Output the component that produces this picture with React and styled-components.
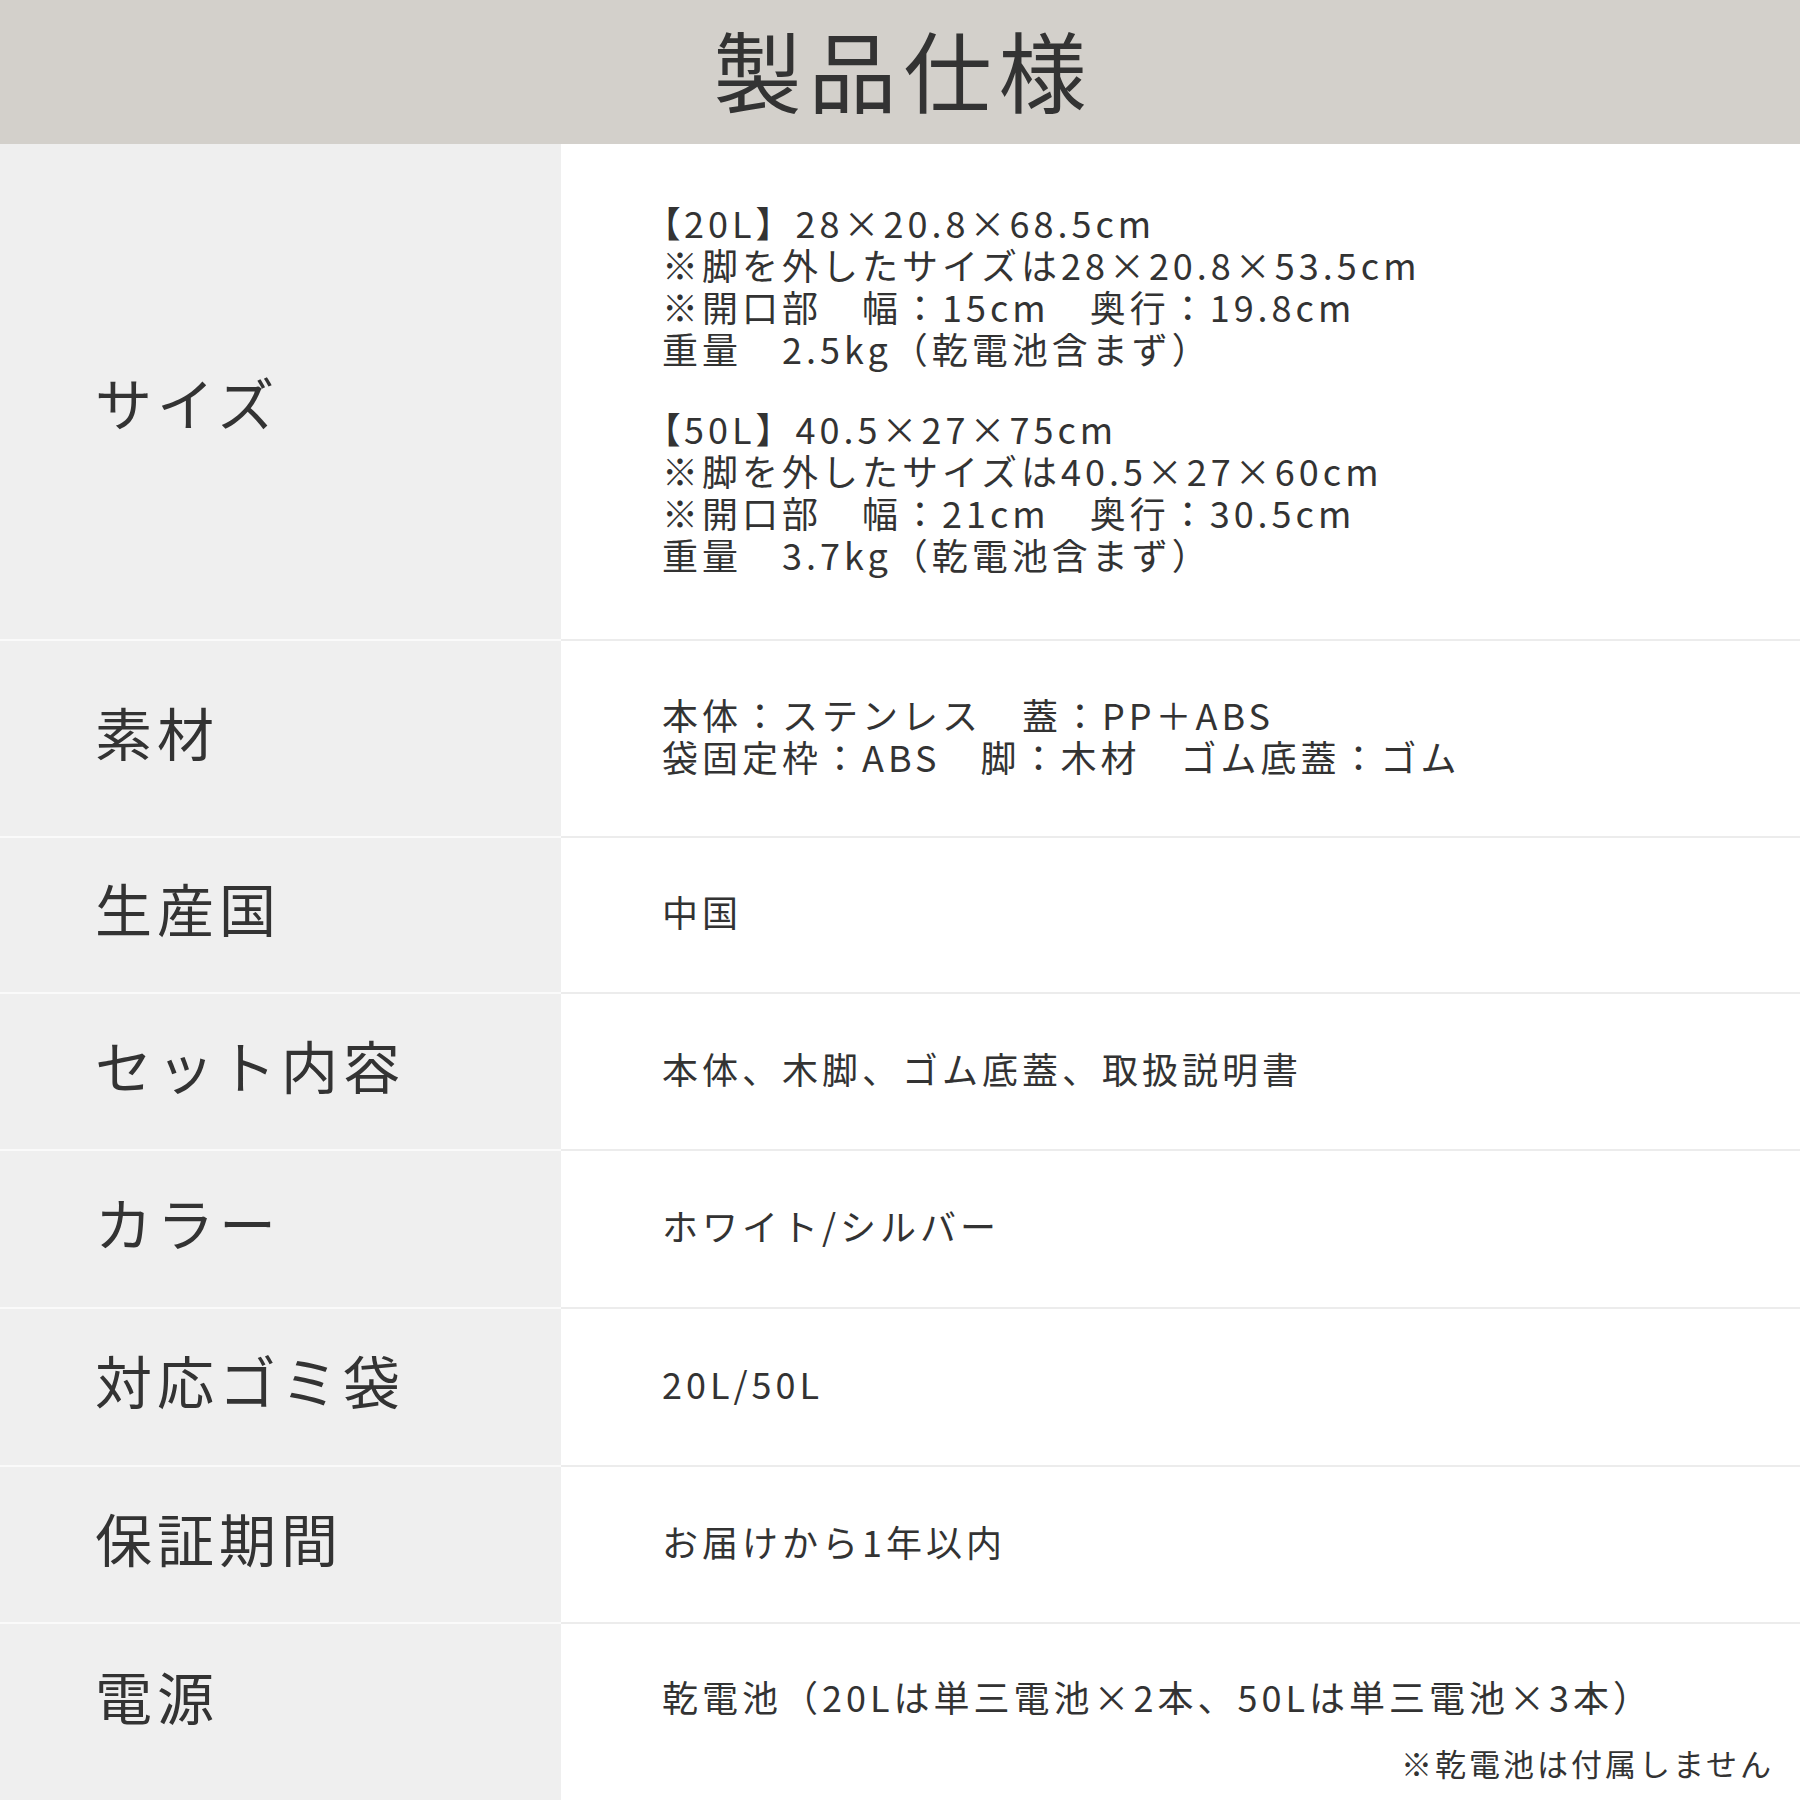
import styled, { createGlobalStyle } from "styled-components"

const GlobalStyle = createGlobalStyle`
  * { box-sizing: border-box; }
  body {
    margin: 0;
    background: #ffffff;
    font-family: "Noto Sans CJK JP", "Noto Sans", sans-serif;
    color: #333333;
  }
`;

const Page = styled.div`
  width: 1800px;
  height: 1800px;
  overflow: hidden;
`;

const Header = styled.header`
  height: 144px;
  padding-bottom: 8px;
  background-color: #d3d0cb;
  display: flex;
  align-items: center;
  justify-content: center;
`;

const Title = styled.h1`
  margin: 0;
  padding-left: 7px;
  font-size: 88px;
  font-weight: 400;
  letter-spacing: 7px;
  line-height: 1;
  color: #333333;
`;

const Table = styled.div`
  display: flex;
  flex-direction: column;
`;

const Row = styled.div`
  display: grid;
  grid-template-columns: 561px 1fr;
  min-height: ${(props) => props.$h}px;
`;

const Label = styled.div`
  display: flex;
  align-items: center;
  padding-left: 95px;
  padding-top: ${(props) => props.$offset || 0}px;
  padding-bottom: ${(props) => props.$bottom || 15}px;
  background-color: #efefef;
  border-top: ${(props) => (props.$first ? "none" : "2px solid #fafafa")};
  font-size: 57px;
  letter-spacing: 5px;
  line-height: 1.2;
`;

const Value = styled.div`
  display: flex;
  flex-direction: column;
  justify-content: ${(props) => (props.$note ? "flex-start" : "center")};
  padding-left: 101px;
  padding-top: ${(props) => (props.$note ? "51px" : "0")};
  padding-bottom: ${(props) => (props.$note ? "0" : "8px")};
  background-color: #ffffff;
  border-top: ${(props) => (props.$first ? "none" : "2px solid #ececec")};
  font-size: 36px;
  letter-spacing: 4px;
  line-height: 42px;
`;

const Block = styled.div`
  & + & {
    margin-top: 38px;
  }
`;

const Line = styled.div`
  white-space: pre;
`;

const OpenBracket = styled.span`
  font-feature-settings: "palt";
`;

const Note = styled.div`
  margin-top: 28px;
  padding-right: 26px;
  text-align: right;
  font-size: 31px;
  letter-spacing: 3px;
  line-height: 36px;
`;

const specs = [
  {
    label: "サイズ",
    h: 495,
    offset: 34,
    blocks: [
      [
        ["【", "20L】28×20.8×68.5cm"],
        "※脚を外したサイズは28×20.8×53.5cm",
        "※開口部　幅：15cm　奥行：19.8cm",
        "重量　2.5kg（乾電池含まず）",
      ],
      [
        ["【", "50L】40.5×27×75cm"],
        "※脚を外したサイズは40.5×27×60cm",
        "※開口部　幅：21cm　奥行：30.5cm",
        "重量　3.7kg（乾電池含まず）",
      ],
    ],
  },
  {
    label: "素材",
    h: 197,
    blocks: [["本体：ステンレス　蓋：PP＋ABS", "袋固定枠：ABS　脚：木材　ゴム底蓋：ゴム"]],
  },
  { label: "生産国", h: 156, blocks: [["中国"]] },
  { label: "セット内容", h: 157, blocks: [["本体、木脚、ゴム底蓋、取扱説明書"]] },
  { label: "カラー", h: 158, blocks: [["ホワイト/シルバー"]] },
  { label: "対応ゴミ袋", h: 158, blocks: [["20L/50L"]] },
  { label: "保証期間", h: 157, blocks: [["お届けから1年以内"]] },
  {
    label: "電源",
    h: 178,
    bottom: 34,
    note: "※乾電池は付属しません",
    blocks: [["乾電池（20Lは単三電池×2本、50Lは単三電池×3本）"]],
  },
];

const App = () => {
  return (
    <Page>
      <GlobalStyle />
      <Header>
        <Title>製品仕様</Title>
      </Header>
      <Table>
        {specs.map((spec, index) => (
          <Row key={spec.label} $h={spec.h}>
            <Label $first={index === 0} $offset={spec.offset} $bottom={spec.bottom}>
              {spec.label}
            </Label>
            <Value $first={index === 0} $note={!!spec.note}>
              {spec.blocks.map((lines, i) => (
                <Block key={i}>
                  {lines.map((line, j) =>
                    Array.isArray(line) ? (
                      <Line key={j}>
                        <OpenBracket>{line[0]}</OpenBracket>
                        {line[1]}
                      </Line>
                    ) : (
                      <Line key={j}>{line}</Line>
                    )
                  )}
                </Block>
              ))}
              {spec.note && <Note>{spec.note}</Note>}
            </Value>
          </Row>
        ))}
      </Table>
    </Page>
  );
};

export default App;
